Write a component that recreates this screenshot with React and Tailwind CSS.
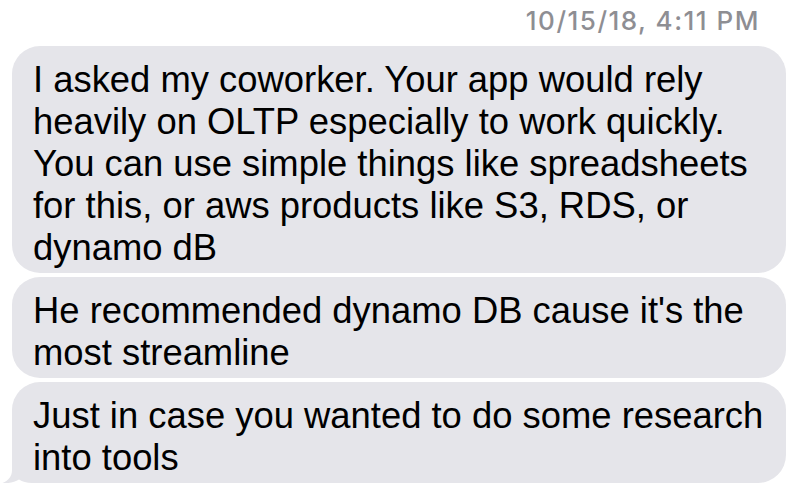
import React from 'react';

// iMessage thread: timestamp + three received bubbles, the last one with a tail
const messages = [
  [
    'I asked my coworker. Your app would rely',
    'heavily on OLTP especially to work quickly.',
    'You can use simple things like spreadsheets',
    'for this, or aws products like S3, RDS, or',
    'dynamo dB',
  ],
  ["He recommended dynamo DB cause it's the", 'most streamline'],
  ['Just in case you wanted to do some research', 'into tools'],
];

const Tail = () => (
  <svg
    className="absolute left-[-12px] bottom-0"
    width="40"
    height="30"
    viewBox="0 0 40 30"
  >
    <path
      d="M12 0 L12 17 C12 23 9 27.5 2.5 30 C9 30.6 14.5 29.2 19 26.6 C22.5 29 26.5 30 32 30 L40 30 L40 0 Z"
      fill="#e5e5ea"
    />
  </svg>
);

const Bubble = ({ lines, tail }) => (
  <div className="relative w-[774px] rounded-[28px] bg-[#e5e5ea] pl-[21px] pr-4 pt-[13px] pb-[4px] text-[36.4px] leading-[42px] text-black">
    {tail && <Tail />}
    {lines.map((l, i) => (
      <div key={i} className="relative whitespace-nowrap">
        {l}
      </div>
    ))}
  </div>
);

export default function App() {
  return (
    <div className="h-[504px] w-full bg-white overflow-hidden font-['Liberation_Sans',Arial,sans-serif]">
      <div className="pt-[6px] pr-[50px] text-right text-[26px] leading-[30px] font-medium tracking-[1.5px] text-[#8e8e93] font-['Inter',sans-serif]">
        10/15/18, 4:11 PM
      </div>
      <div className="mt-[10px] ml-[12px] flex flex-col gap-[4px]">
        {messages.map((m, i) => (
          <Bubble key={i} lines={m} tail={i === messages.length - 1} />
        ))}
      </div>
    </div>
  );
}
